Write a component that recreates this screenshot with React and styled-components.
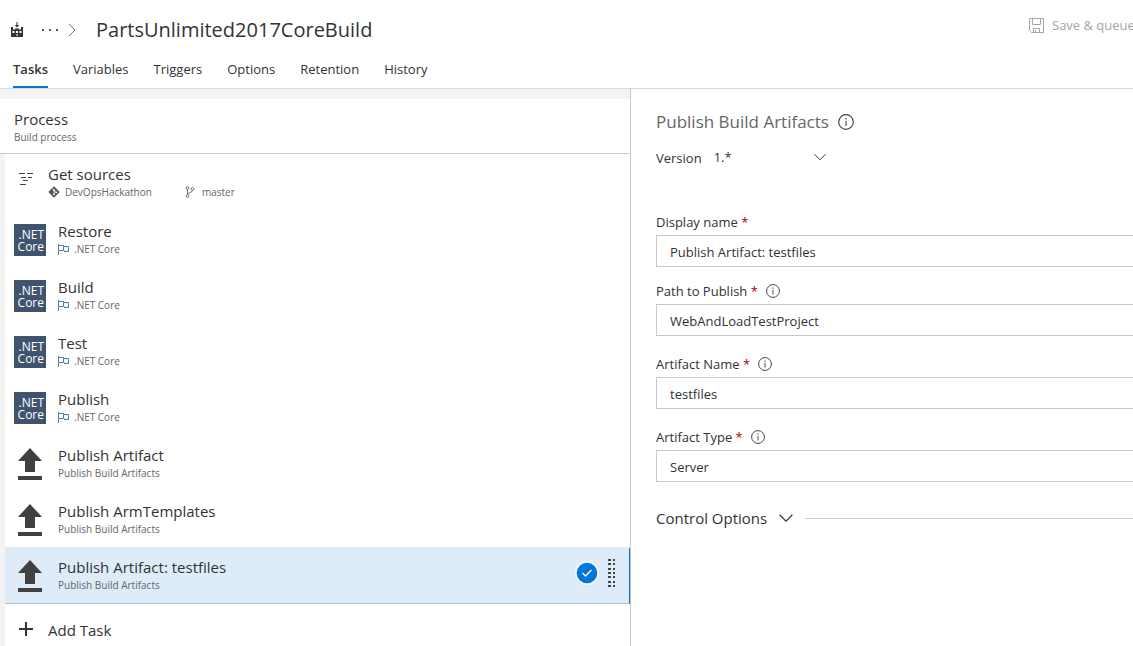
import React from "react";
import styled, { createGlobalStyle } from "styled-components";

const GlobalStyle = createGlobalStyle`
  * { box-sizing: border-box; }
  body {
    margin: 0;
    background: #fff;
    color: #333;
    font-family: "Open Sans", "Noto Sans", sans-serif;
    font-size: 13px;
    line-height: 20px;
  }
  button, input, select { font: inherit; color: inherit; }
`;

const Page = styled.div`
  display: flex;
  flex-direction: column;
  height: 100vh;
  overflow: hidden;
`;

const Header = styled.header`
  flex: none;
  border-bottom: 1px solid #d6d9dc;
  overflow: hidden;
`;

const TitleBar = styled.div`
  display: flex;
  align-items: center;
  height: 50px;
  padding: 10px 0 0 10px;
  white-space: nowrap;
`;

const Crumbs = styled.nav`
  display: flex;
  align-items: center;
  flex: 1;
  min-width: 0;
`;

const IconButton = styled.button`
  display: flex;
  padding: 0;
  border: 0;
  background: none;
  margin-right: ${(p) => p.$gap || 0}px;
`;

const Title = styled.h1`
  margin: 0;
  font-size: 20px;
  line-height: 28px;
  font-weight: 400;
`;

const SaveButton = styled.button`
  display: flex;
  align-items: center;
  gap: 8px;
  flex: none;
  margin: 0 -6px 10px 0;
  padding: 0;
  border: 0;
  background: none;
  color: #a6a6a6;
`;

const SaveLabel = styled.span`
  min-width: 87px;
  text-align: left;
`;

const Tabs = styled.nav`
  display: flex;
  gap: 25px;
  padding-left: 13px;
`;

const Tab = styled.a`
  height: 38px;
  padding-top: 9px;
  border-bottom: 2px solid ${(p) => (p.$active ? "#0f73c6" : "transparent")};
  color: #333;
  font-weight: ${(p) => (p.$active ? 600 : 400)};
  text-decoration: none;
`;

const Body = styled.main`
  display: grid;
  grid-template-columns: 631fr 502fr;
  flex: 1;
  min-height: 0;
`;

const Pipeline = styled.section`
  display: flex;
  flex-direction: column;
  min-width: 0;
  padding-top: 10px;
  background: #f3f3f3;
  border-right: 1px solid #c8c8c8;
  overflow: hidden;
`;

const Process = styled.div`
  height: 55px;
  padding: 10px 14px 0;
  background: #fff;
  border-bottom: 1px solid #c8c8c8;
`;

const TaskList = styled.div`
  flex: 1;
  margin-left: 5px;
  background: #fff;
`;

const Row = styled.div`
  display: flex;
  align-items: center;
  gap: 12px;
  height: 56px;
  padding-left: 9px;
  ${(p) =>
    p.$selected &&
    `
    background: #deecf9;
    border-right: 1px solid #106ebe;
    border-bottom: 1px solid #b5c3d0;
    box-shadow: 0 -1px #deecf9;
  `}
`;

const SourceRow = styled(Row)`
  gap: 14px;
  height: 58px;
  padding-left: 13px;
  > svg { margin-bottom: 8px; }
`;

const RowText = styled.div`
  flex: 1;
  min-width: 0;
  padding-bottom: 2px;
`;

const RowActions = styled.div`
  display: flex;
  align-items: center;
  gap: 9px;
  padding: 0 13px 6px 0;
`;

const Name = styled.div`
  font-size: 15px;
  line-height: 20px;
`;

const Detail = styled.div`
  display: flex;
  align-items: center;
  gap: ${(p) => p.$gap || 4}px;
  color: #666;
  font-size: 10px;
  line-height: 16px;
`;

const Branch = styled.span`
  display: flex;
  align-items: center;
  gap: 7px;
  margin-left: 28px;
`;

const NetTile = styled.div`
  width: 32px;
  height: 32px;
  padding: 5px 2px 0 0;
  background: #41546f;
  color: #fff;
  font-size: 12px;
  line-height: 12px;
  text-align: right;
`;

const AddTask = styled.button`
  display: flex;
  align-items: center;
  gap: 14px;
  width: 100%;
  height: 42px;
  padding: 10px 0 0 13px;
  border: 0;
  background: none;
  font-size: 15px;
`;

const Details = styled.section`
  min-width: 0;
  padding: 20px 0 0 25px;
`;

const Heading = styled.h2`
  display: flex;
  align-items: center;
  gap: 9px;
  margin: 0;
  color: #666;
  font-size: 17px;
  line-height: 26px;
  font-weight: 400;
`;

const VersionLine = styled.div`
  display: flex;
  align-items: center;
  gap: 12px;
  margin: 12px 0 42px;
`;

const SelectWrap = styled.div`
  display: grid;
  align-items: center;
  width: 112px;
  padding-bottom: 2px;
  > * { grid-area: 1 / 1; }
  > svg { justify-self: end; pointer-events: none; }
`;

const PlainSelect = styled.select`
  width: 100%;
  padding: 0;
  border: 0;
  background: none;
  appearance: none;
`;

const Field = styled.div`
  margin-bottom: ${(p) => (p.$tight ? 13 : 17)}px;
`;

const Caption = styled.div`
  display: flex;
  align-items: center;
  gap: 8px;
  height: 24px;
  padding-bottom: 2px;
`;

const Required = styled.span`
  color: #a80000;
`;

const TextBox = styled.input`
  display: block;
  width: 100%;
  height: 32px;
  padding: 2px 13px 0;
  border: 1px solid #c8c8c8;
  border-right: 0;
  border-radius: 0;
  background: #fff;
`;

const BoxSelect = styled(TextBox).attrs({ as: "select" })`
  appearance: none;
`;

const ControlOptions = styled.button`
  display: flex;
  align-items: center;
  gap: 12px;
  width: 100%;
  margin-top: 26px;
  padding: 0;
  border: 0;
  background: none;
  font-size: 15px;
  white-space: nowrap;
`;

const Rule = styled.span`
  flex: 1;
  height: 1px;
  background: #c8c8c8;
`;

const BuildIcon = () => (
  <svg width="14" height="16" viewBox="0 0 14 16" fill="#333">
    <path d="M6.500 0h1v3h1.700L7 5.500 4.800 3h1.700z" />
    <path
      fillRule="evenodd"
      d="M1 5h2v2.500h2V6.500h4v1h2V5h2v10H1zM2.500 9v2h2V9zm3.500 0v2h2V9zm3.500 0v2h2V9zM6 12.500v1h2v-1z"
    />
  </svg>
);

const Dots = () => (
  <svg width="16" height="4" viewBox="0 0 16 4" fill="#555">
    <path d="M0 1h2v2H0zM7 1h2v2H7zM14 1h2v2h-2z" />
  </svg>
);

const CrumbArrow = () => (
  <svg width="8" height="14" viewBox="0 0 8 14" fill="none" stroke="#777">
    <path d="M1 1l6 6-6 6" />
  </svg>
);

const SaveIcon = () => (
  <svg width="15" height="15" viewBox="0 0 15 15" fill="none" stroke="#a6a6a6">
    <path d="M.5.5h14v14h-12l-2-2zM3.500.5v6h8v-6M4.500 14.500v-4h6v4M6.500 12v2.500" />
  </svg>
);

const SourceIcon = () => (
  <svg width="16" height="14" viewBox="0 0 16 14" stroke="#444" fill="none">
    <path d="M1 1.500h6M9 1.500h6M3 5.500h5M10 5.500h4M5 8.500h5M2 12.500h6" />
  </svg>
);

const GitIcon = () => (
  <svg width="12" height="12" viewBox="0 0 12 12">
    <path d="M6 .3L11.700 6 6 11.700.3 6z" fill="#555" />
    <path d="M4.300 2.500L6 4.200v4M6 4.500l2.200 1.900" stroke="#fff" fill="none" strokeWidth=".8" />
    <g fill="#fff">
      <circle cx="6" cy="4.200" r=".9" />
      <circle cx="6" cy="8.300" r=".9" />
      <circle cx="8.200" cy="6.300" r=".9" />
    </g>
  </svg>
);

const BranchIcon = () => (
  <svg width="10" height="12" viewBox="0 0 10 12" fill="none" stroke="#666" strokeWidth=".9">
    <circle cx="2.500" cy="2" r="1.400" />
    <circle cx="7.500" cy="3" r="1.400" />
    <circle cx="2.500" cy="10" r="1.400" />
    <path d="M2.500 3.400v5.200M7.500 4.400C7.500 7 2.500 6 2.500 8.600" />
  </svg>
);

const FlagIcon = () => (
  <svg width="11" height="11" viewBox="0 0 11 11" fill="none">
    <path d="M.5 0v11" stroke="#777" />
    <path d="M.5 1.500h5v5h-5M5.500 2.500h5v5h-4v-1" stroke="#3f7cba" />
  </svg>
);

const UploadIcon = () => (
  <svg width="32" height="32" viewBox="0 0 32 32" fill="#404040">
    <path d="M16 0l12 13h-7v11H11V13H4zM4 28h24v4H4z" />
  </svg>
);

const CheckIcon = () => (
  <svg width="24" height="24" viewBox="0 0 24 24">
    <circle cx="12" cy="12" r="12" fill="#f4f9fe" />
    <circle cx="12" cy="12" r="10.300" fill="#0078d7" />
    <path d="M7.500 12l3 3 6-6" fill="none" stroke="#fff" strokeWidth="1.300" />
  </svg>
);

const Grip = () => (
  <svg width="8" height="28" viewBox="0 0 8 28" fill="#444">
    {[0, 4, 9, 13, 17, 22, 26].map((y) => (
      <path key={y} d={`M0 ${y}h3v2H0zM5 ${y}h2v2H5z`} />
    ))}
  </svg>
);

const PlusIcon = () => (
  <svg width="16" height="16" viewBox="0 0 16 16" stroke="#333" strokeWidth="2">
    <path d="M8 0v14M1 7h14" />
  </svg>
);

const Chevron = ({ size = 12 }) => (
  <svg width={size} height={size} viewBox="0 0 12 12" fill="none" stroke="#333">
    <path d="M.5 3.200L6 8.800l5.500-5.600" />
  </svg>
);

const InfoIcon = ({ size = 14 }) => (
  <svg width={size} height={size} viewBox="0 0 14 14" fill="none" stroke="#444">
    <circle cx="7" cy="7" r="6.400" />
    <path d="M7 6v4.500M7 3.500v1.300" />
  </svg>
);

const tasks = [
  { name: "Restore", net: true },
  { name: "Build", net: true },
  { name: "Test", net: true },
  { name: "Publish", net: true },
  { name: "Publish Artifact" },
  { name: "Publish ArmTemplates" },
  { name: "Publish Artifact: testfiles", selected: true },
];

const TaskRow = ({ name, net, selected }) => (
  <Row $selected={selected}>
    {net ? (
      <NetTile>
        .NET
        <br />
        Core
      </NetTile>
    ) : (
      <UploadIcon />
    )}
    <RowText>
      <Name>{name}</Name>
      <Detail $gap={5}>
        {net && <FlagIcon />}
        {net ? ".NET Core" : "Publish Build Artifacts"}
      </Detail>
    </RowText>
    {selected && (
      <RowActions>
        <CheckIcon />
        <IconButton aria-label="Drag task">
          <Grip />
        </IconButton>
      </RowActions>
    )}
  </Row>
);

const FormField = ({ id, label, value, info, tight, select }) => (
  <Field $tight={tight}>
    <Caption>
      <label htmlFor={id}>
        {label} <Required>*</Required>
      </label>
      {info && <InfoIcon />}
    </Caption>
    {select ? (
      <BoxSelect id={id} defaultValue={value}>
        <option>{value}</option>
      </BoxSelect>
    ) : (
      <TextBox id={id} defaultValue={value} />
    )}
  </Field>
);

export default function App() {
  return (
    <Page>
      <GlobalStyle />
      <Header>
        <TitleBar>
          <Crumbs>
            <IconButton aria-label="Builds" $gap={18}>
              <BuildIcon />
            </IconButton>
            <IconButton aria-label="More" $gap={10}>
              <Dots />
            </IconButton>
            <IconButton as="span" $gap={20}>
              <CrumbArrow />
            </IconButton>
            <Title>PartsUnlimited2017CoreBuild</Title>
          </Crumbs>
          <SaveButton>
            <SaveIcon />
            <SaveLabel>Save &amp; queue</SaveLabel>
          </SaveButton>
        </TitleBar>
        <Tabs>
          {["Tasks", "Variables", "Triggers", "Options", "Retention", "History"].map((t, i) => (
            <Tab key={t} href={`#${t}`} $active={i === 0}>
              {t}
            </Tab>
          ))}
        </Tabs>
      </Header>
      <Body>
        <Pipeline>
          <Process>
            <Name>Process</Name>
            <Detail>Build process</Detail>
          </Process>
          <TaskList>
            <SourceRow>
              <SourceIcon />
              <RowText>
                <Name>Get sources</Name>
                <Detail $gap={5}>
                  <GitIcon />
                  DevOpsHackathon
                  <Branch>
                    <BranchIcon />
                    master
                  </Branch>
                </Detail>
              </RowText>
            </SourceRow>
            {tasks.map((t) => (
              <TaskRow key={t.name} {...t} />
            ))}
            <AddTask>
              <PlusIcon />
              Add Task
            </AddTask>
          </TaskList>
        </Pipeline>
        <Details>
          <Heading>
            Publish Build Artifacts
            <InfoIcon size={16} />
          </Heading>
          <VersionLine>
            <label htmlFor="version">Version</label>
            <SelectWrap>
              <PlainSelect id="version" defaultValue="1.*">
                <option>1.*</option>
              </PlainSelect>
              <Chevron />
            </SelectWrap>
          </VersionLine>
          <FormField id="display" label="Display name" value="Publish Artifact: testfiles" tight />
          <FormField id="path" label="Path to Publish" value="WebAndLoadTestProject" info />
          <FormField id="artifact" label="Artifact Name" value="testfiles" info />
          <FormField id="type" label="Artifact Type" value="Server" info select />
          <ControlOptions>
            Control Options
            <Chevron size={14} />
            <Rule />
          </ControlOptions>
        </Details>
      </Body>
    </Page>
  );
}
